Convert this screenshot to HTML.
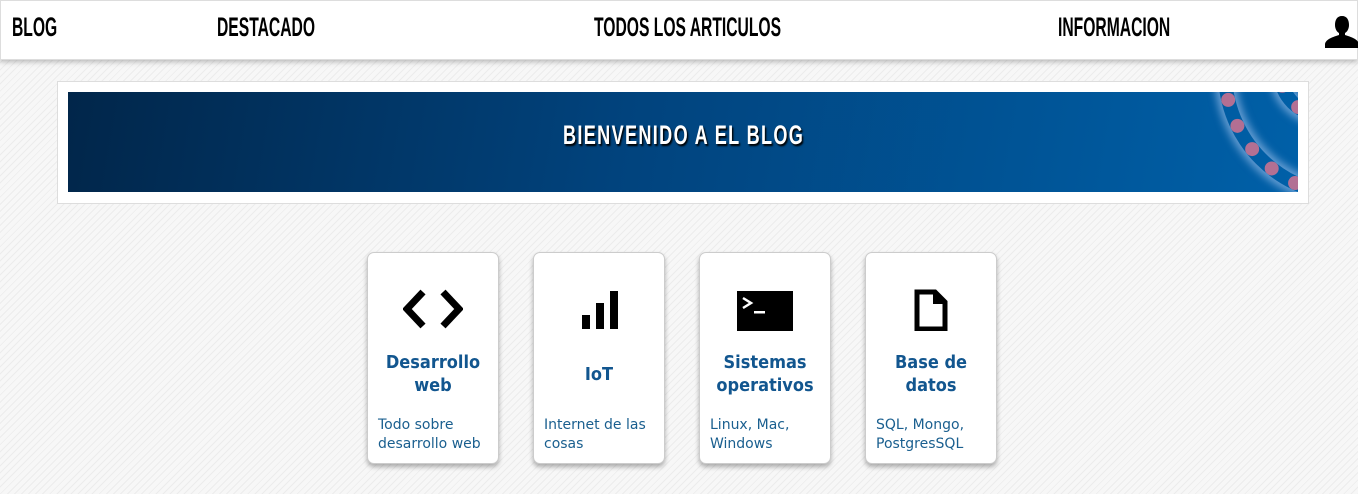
<!DOCTYPE html>
<html><head><meta charset="utf-8"><style>
*{margin:0;padding:0;box-sizing:border-box}
body{width:1358px;height:494px;overflow:hidden;background:#f6f6f6 repeating-linear-gradient(135deg,#f7f7f7 0 4px,#ececec 4px 5px);font-family:"DejaVu Sans","Liberation Sans",sans-serif}
nav{position:absolute;left:0;top:0;width:1358px;height:60px;background:#fff;border:1px solid #ddd;box-shadow:0 2px 5px rgba(0,0,0,.25)}
nav span{position:absolute;top:11px;font-family:"Liberation Sans",sans-serif;font-weight:bold;font-size:27px;color:#000;transform:scaleX(.58);transform-origin:left top;letter-spacing:0}
.box{position:absolute;left:57px;top:81px;width:1252px;height:123px;background:#fff;border:1px solid #ddd}
.ban{position:absolute;left:10px;top:10px;width:1230px;height:100px;background:linear-gradient(100deg,#01264a 0%,#01437d 45%,#0060a8 100%);overflow:hidden}
.ban h1{position:absolute;left:495px;top:28px;font-family:"Liberation Sans",sans-serif;font-size:27px;color:#fff;letter-spacing:2px;transform:scaleX(.67);transform-origin:left top;text-shadow:2px 2px 2px #000;white-space:nowrap}
.ring{position:absolute;border-radius:50%;border:14px dotted rgba(255,120,140,.7);box-shadow:0 0 8px 4px rgba(200,220,255,.5),inset 0 0 8px 4px rgba(200,220,255,.5)}
.card{position:absolute;top:252px;width:132px;height:212px;background:#fff;border:1px solid #ccc;border-radius:7px;box-shadow:0 3px 5px rgba(0,0,0,.3);text-align:center}
.card svg{position:absolute;left:50%;top:36px;transform:translateX(-50%)}
.card h3{position:absolute;left:0;right:0;color:#12568f;font-size:18px;line-height:23px;font-weight:bold;font-family:"DejaVu Sans Condensed","DejaVu Sans",sans-serif}
.card p{position:absolute;left:10px;top:163px;text-align:left;color:#1a5f8f;font-size:14px;line-height:19px;font-family:"DejaVu Sans",sans-serif;white-space:nowrap}
</style></head><body>
<nav>
<span style="left:11px">BLOG</span>
<span style="left:216px">DESTACADO</span>
<span style="left:593px">TODOS LOS ARTICULOS</span>
<span style="left:1057px">INFORMACION</span>
<svg style="position:absolute;left:1324px;top:15px" width="34" height="32" viewBox="0 0 34 32"><path d="M17 0c-5 0-7 4-7 9 0 4 2 7 4 8v2c-6 2-13 4-14 9v4h34v-4c-1-5-8-7-14-9v-2c2-1 4-4 4-8 0-5-2-9-7-9z" fill="#000"/></svg>
</nav>
<div class="box"><div class="ban">
<div class="ring" style="left:1150px;top:-150px;width:260px;height:260px"></div>
<div class="ring" style="left:1205px;top:-70px;width:100px;height:100px"></div>
<h1>BIENVENIDO A EL BLOG</h1>
</div></div>

<div class="card" style="left:367px">
<svg width="60" height="42" viewBox="0 0 60 42"><path d="M20 3L4 20l16 17M40 3l16 17-16 17" stroke="#000" stroke-width="7" fill="none"/></svg>
<h3 style="top:98px">Desarrollo<br>web</h3><p>Todo sobre<br>desarrollo web</p></div>
<div class="card" style="left:533px">
<svg width="42" height="42" viewBox="0 0 42 42"><rect x="4" y="26" width="8" height="14"/><rect x="18" y="14" width="8" height="26"/><rect x="32" y="2" width="8" height="38"/></svg>
<h3 style="top:110px">IoT</h3><p>Internet de las<br>cosas</p></div>
<div class="card" style="left:699px">
<svg width="56" height="42" viewBox="0 0 56 42"><rect x="0" y="2" width="56" height="40"/><path d="M6 9l8 5-8 5" stroke="#fff" stroke-width="2.5" fill="none"/><rect x="17" y="22" width="11" height="2.5" fill="#fff"/></svg>
<h3 style="top:98px">Sistemas<br>operativos</h3><p>Linux, Mac,<br>Windows</p></div>
<div class="card" style="left:865px">
<svg width="34" height="42" viewBox="0 0 34 42"><path d="M3 3h18l10 10v27H3z" fill="none" stroke="#000" stroke-width="5"/><path d="M19 3v12h12" fill="#000"/></svg>
<h3 style="top:98px">Base de<br>datos</h3><p>SQL, Mongo,<br>PostgresSQL</p></div>
</body></html>
